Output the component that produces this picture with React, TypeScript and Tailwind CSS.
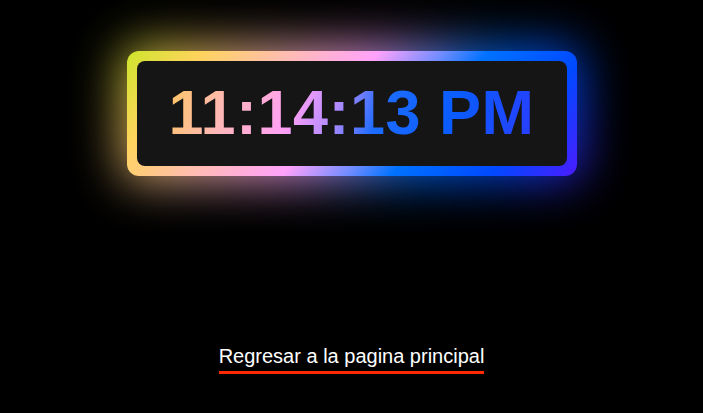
const GRADIENT =
  "linear-gradient(128deg, #cde52b 0%, #ffd35e 14%, #ffbcb4 30%, #ffa2fb 46%, #6f8cff 58%, #0072ff 66%, #0049ff 84%, #4b1cff 100%)";

function Clock() {
  return (
    <div className="relative isolate mt-[51px] h-[125px] w-[450px]">
      {/* glow behind the frame */}
      <div
        className="absolute inset-[-6px] -z-10 rounded-[18px] opacity-80 blur-[24px]"
        style={{ backgroundImage: GRADIENT }}
      />
      <div
        className="h-full w-full rounded-[12px] p-[10px]"
        style={{ backgroundImage: GRADIENT }}
      >
        <div className="flex h-full w-full items-center justify-center rounded-[8px] bg-[#151515]">
          <span
            className="bg-clip-text pb-[2px] font-['Liberation_Sans',Arial,sans-serif] text-[63px] leading-none font-bold tracking-[0.5px] text-transparent"
            style={{
              backgroundImage:
                "linear-gradient(110deg, #ffc65e 0%, #ffb8b8 17%, #ffa0f5 34%, #b08aff 46%, #1d6cff 57%, #0a5cff 76%, #2a3cff 100%)",
            }}
          >
            11:14:13 PM
          </span>
        </div>
      </div>
    </div>
  );
}

export default function App() {
  return (
    <div className="flex h-[413px] w-full flex-col items-center bg-black font-['Liberation_Sans',Arial,sans-serif]">
      <Clock />
      <a
        href="#"
        className="mt-[169px] border-b-[3px] border-[#ff2a00] pb-[3px] text-[20px] leading-[23px] text-white"
      >
        Regresar a la pagina principal
      </a>
    </div>
  );
}
